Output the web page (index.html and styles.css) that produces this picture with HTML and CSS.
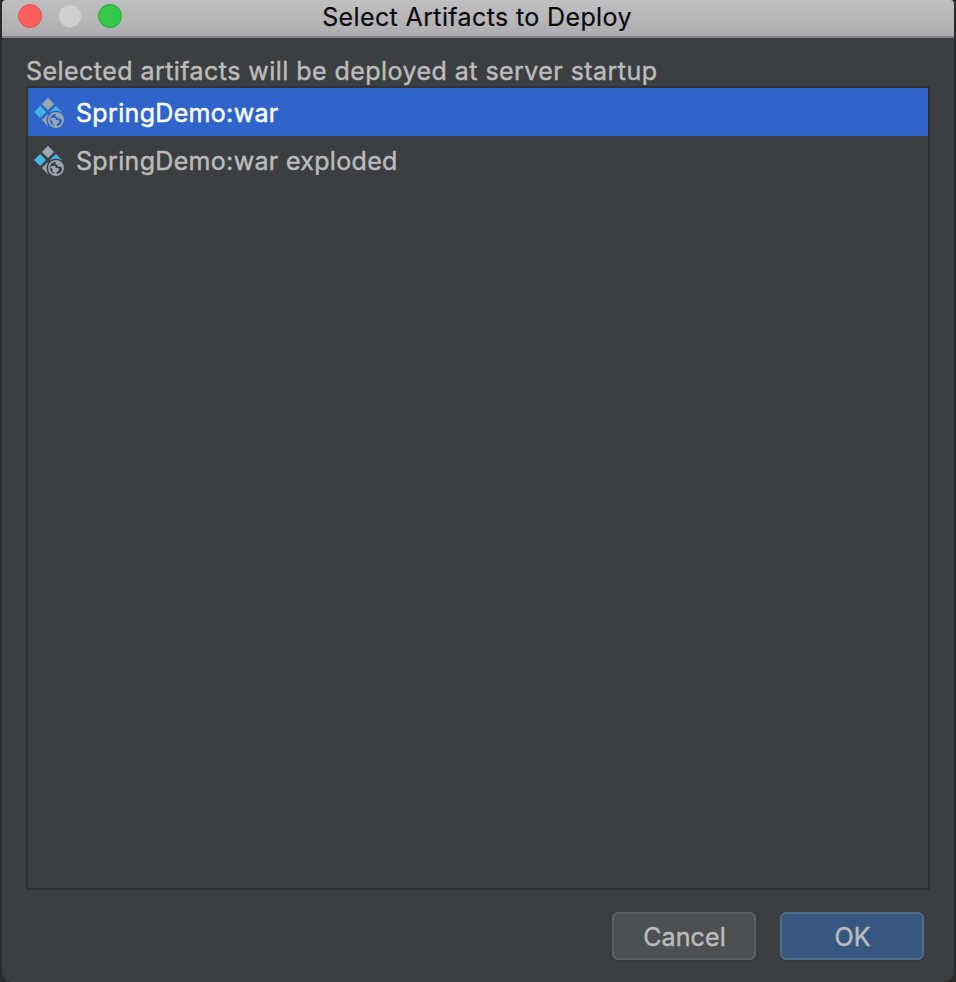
FILE: index.html
```html
<!DOCTYPE html>
<html lang="en">
<head>
<meta charset="utf-8">
<title>Select Artifacts to Deploy</title>
<link rel="stylesheet" href="styles.css">
</head>
<body>
<svg class="defs" width="0" height="0" aria-hidden="true">
  <defs>
    <mask id="cut"><rect width="32" height="32" fill="#fff"/><circle cx="24" cy="24" r="9.6" fill="#000"/></mask>
    <symbol id="artifact" viewBox="0 0 32 32">
      <g mask="url(#cut)">
        <path fill="#9aa7b0" d="M16 1.8l6.1 6.1-6.1 6.1-6.1-6.1zM16 18l6.1 6.1-6.1 6.1-6.1-6.1z"/>
        <path fill="#40b6e0" d="M8.1 9.9l6.1 6.1-6.1 6.1L2 16zM23.9 9.9l6.1 6.1-6.1 6.1-6.1-6.1z"/>
      </g>
      <circle cx="24" cy="24" r="7.1" fill="none" stroke="#9aa7b0" stroke-width="1.8"/>
      <path fill="#9aa7b0" d="M18.6 22h4.9v2h3.2v2.8l-2 1.2v3h-2.4v-2.6h-1.6v-2.8l-2.4-2z M24.4 17l4.2 1.6 2.4 4-1 1.6-1.8-1.8h-2.6v-1.6h-2v-2z"/>
    </symbol>
  </defs>
</svg>
<main class="window">
  <header class="titlebar">
    <div class="lights"><i class="light close"></i><i class="light minimize"></i><i class="light maximize"></i></div>
    <h1 class="title">Select Artifacts to Deploy</h1>
  </header>
  <section class="content">
    <p class="label">Selected artifacts will be deployed at server startup</p>
    <ul class="list">
      <li class="row selected"><svg class="icon"><use href="#artifact"/></svg><span class="name">SpringDemo:war</span></li>
      <li class="row"><svg class="icon"><use href="#artifact"/></svg><span class="name">SpringDemo:war exploded</span></li>
    </ul>
    <footer class="actions">
      <button class="button">Cancel</button>
      <button class="button primary">OK</button>
    </footer>
  </section>
</main>
</body>
</html>
```
FILE: styles.css
```css
* { box-sizing: border-box; }
body { margin: 0; height: 982px; padding: 0 2px; background: #292b2d; font-family: Inter, "Liberation Sans", sans-serif; font-size: 25px; color: #bbb; overflow: hidden; -webkit-text-stroke: .45px currentColor; }
.defs { position: absolute; }
.window { height: 982px; display: flex; flex-direction: column; background: #3c3f41; border-radius: 4px 4px 10px 10px; overflow: hidden; }
.titlebar { height: 38px; flex: none; display: grid; grid-template-columns: 200px 1fr 200px; background: linear-gradient(#c0bfc1, #adacae); border-bottom: 2px solid #858587; }
.lights { display: flex; gap: 16px; padding: 4px 0 0 16px; }
.light { width: 24px; height: 24px; border-radius: 50%; border: 1px solid; }
.close { background: #ff605c; border-color: #e0514e; }
.minimize { background: #d1d0d1; border-color: #bdbcbd; }
.maximize { background: #34c84a; border-color: #25a838; }
.title { margin: 0; font-size: 25px; font-weight: 400; line-height: 34px; letter-spacing: .38px; text-align: center; color: #0b0b0b; white-space: nowrap; padding-right: 2px; -webkit-text-stroke-width: .2px; }
.content { flex: 1; display: flex; flex-direction: column; padding: 16px 24px 22px; }
.label { margin: 0; height: 32px; line-height: 34px; letter-spacing: .45px; white-space: nowrap; }
.list { margin: 0; padding: 0; list-style: none; height: 804px; border: 2px solid #323232; }
.row { height: 48px; display: flex; align-items: center; gap: 12px; padding: 0 4px; white-space: nowrap; }
.row.selected { background: #2f65ca; color: #fff; }
.name { letter-spacing: .33px; padding-top: 2px; }
.icon { width: 32px; height: 32px; }
.actions { display: flex; justify-content: flex-end; gap: 24px; padding: 22px 6px 0 0; }
.button { width: 144px; height: 48px; padding: 2px 0 0 1px; border: 2px solid #5e6060; border-radius: 6px; background: #4c5052; color: #bbb; font: inherit; letter-spacing: .1px; box-shadow: 0 2px 2px #36393b; -webkit-text-stroke: .45px currentColor; }
.primary { background: #365880; border-color: #4c708c; }
```
